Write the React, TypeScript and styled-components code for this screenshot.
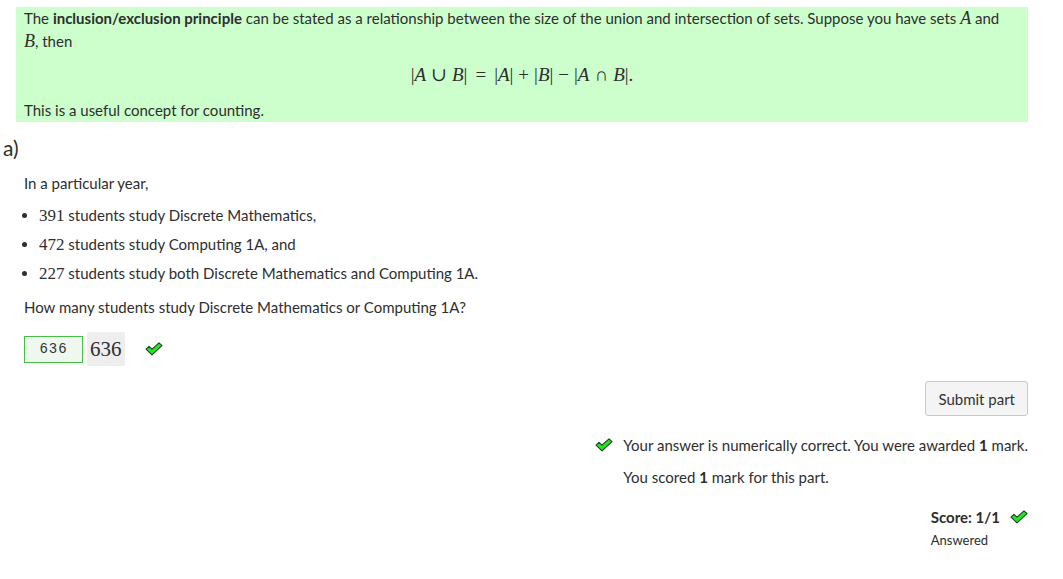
import React from 'react'
import styled, { createGlobalStyle } from 'styled-components'

const GlobalStyle = createGlobalStyle`
  html, body {
    margin: 0;
    padding: 0;
    background: #fff;
  }
  body {
    font-family: Lato, 'Noto Sans', sans-serif;
    font-size: 15px;
    color: #2e2e2e;
  }
`

const Tick: React.FC<{ size?: number }> = ({ size = 18 }) => (
  <TickSvg width={size} height={(size * 14) / 18} viewBox="0 0 18 14" aria-hidden="true">
    <path
      d="M1 7.2 L4 4.4 L7 7.2 L14 0.9 L17 3.6 L7 12.9 Z"
      fill="#1ee81e"
      stroke="#2a3a2a"
      strokeWidth="1.1"
      strokeLinejoin="round"
    />
  </TickSvg>
)

export default function App() {
  return (
    <Page>
      <GlobalStyle />
      <Statement>
        <p>
          The <b>inclusion/exclusion principle</b> can be stated as a relationship between the size of the union and
          intersection of sets. Suppose you have sets <MathVar>A</MathVar> and{' '}
          <NoWrap>
            <MathVar>B</MathVar>, then
          </NoWrap>
        </p>
        <Formula>
          |<i>A</i>
          <Op>∪</Op>
          <i>B</i>|<Rel>=</Rel>|<i>A</i>|<Op>+</Op>|<i>B</i>|<Op>−</Op>|<i>A</i>
          <Op>∩</Op>
          <i>B</i>|.
        </Formula>
        <p>This is a useful concept for counting.</p>
      </Statement>

      <PartHeader>a)</PartHeader>
      <PartBody>
        <Para>In a particular year,</Para>
        <Bullets>
          <li>
            <MathNum>391</MathNum> students study Discrete Mathematics,
          </li>
          <li>
            <MathNum>472</MathNum> students study Computing 1A, and
          </li>
          <li>
            <MathNum>227</MathNum> students study both Discrete Mathematics and Computing 1A.
          </li>
        </Bullets>
        <Question>How many students study Discrete Mathematics or Computing 1A?</Question>
        <AnswerRow>
          <AnswerInput>636</AnswerInput>
          <Preview>636</Preview>
          <Tick />
        </AnswerRow>

        <Actions>
          <SubmitButton>Submit part</SubmitButton>
        </Actions>

        <Feedback>
          <FeedbackLine>
            <TickSlot>
              <Tick />
            </TickSlot>
            <span>
              Your answer is numerically correct. You were awarded <b>1</b> mark.
            </span>
          </FeedbackLine>
          <FeedbackLine>
            <TickSlot />
            <span>
              You scored <b>1</b> mark for this part.
            </span>
          </FeedbackLine>
        </Feedback>

        <ScoreBlock>
          <ScoreLine>
            Score: 1/1
            <Tick />
          </ScoreLine>
          <Status>Answered</Status>
        </ScoreBlock>
      </PartBody>
    </Page>
  )
}

const Page = styled.div`
  padding: 7px 35px 0 0;
`

const Statement = styled.div`
  margin-left: 16px;
  background: #ccffcc;
  padding: 0 8px;
  line-height: 23px;

  p {
    margin: 0;
  }
`

const NoWrap = styled.span`
  white-space: nowrap;
`

const MathVar = styled.i`
  font-family: 'Liberation Serif', 'DejaVu Serif', serif;
  font-size: 18px;
`

const Formula = styled.div`
  text-align: center;
  font-family: 'Liberation Serif', 'DejaVu Serif', serif;
  font-size: 19px;
  margin: 10px 0 12px;
  line-height: 24px;
`

const Op = styled.span`
  margin: 0 5px;
`

const Rel = styled.span`
  margin: 0 8px;
`

const PartHeader = styled.h3`
  margin: 12px 0 0 3px;
  font-family: Lato, 'Noto Sans', sans-serif;
  font-weight: 400;
  font-size: 21px;
  line-height: 28px;
`

const PartBody = styled.div`
  padding-left: 24px;
  display: flex;
  flex-direction: column;
`

const Para = styled.p`
  margin: 10px 0 7px;
  line-height: 22px;
`

const Question = styled(Para)`
  margin-top: 8px;
`

const Bullets = styled.ul`
  margin: 0;
  padding-left: 15px;
  line-height: 28px;
`

const MathNum = styled.span`
  font-family: 'Liberation Serif', 'DejaVu Serif', serif;
  font-size: 17px;
`

const AnswerRow = styled.div`
  display: flex;
  align-items: center;
  gap: 4px;
  margin-top: 7px;
`

const AnswerInput = styled.div`
  width: 57px;
  height: 25px;
  border: 1px solid #44c044;
  background: #eef8ee;
  font-family: 'Liberation Mono', monospace;
  font-size: 14px;
  letter-spacing: 1px;
  display: flex;
  align-items: center;
  justify-content: center;
  color: #333;
`

const Preview = styled.div`
  background: #eeeeee;
  font-family: 'Liberation Serif', 'DejaVu Serif', serif;
  font-size: 21px;
  padding: 0 3px;
  height: 34px;
  display: flex;
  align-items: center;
  margin-right: 16px;
`

const TickSvg = styled.svg`
  display: inline-block;
  flex-shrink: 0;
`

const Actions = styled.div`
  display: flex;
  justify-content: flex-end;
  margin-top: 15px;
`

const SubmitButton = styled.button`
  font-family: Lato, 'Noto Sans', sans-serif;
  font-size: 15px;
  color: #333;
  background: #f4f4f4;
  border: 1px solid #a8d4f0;
  border-radius: 3px;
  padding: 0 12px;
  height: 35px;
`

const Feedback = styled.div`
  align-self: flex-end;
  margin-top: 18px;
  display: flex;
  flex-direction: column;
  gap: 10px;
`

const FeedbackLine = styled.div`
  display: flex;
  align-items: center;
  line-height: 22px;
`

const TickSlot = styled.span`
  width: 28px;
  display: flex;
  align-items: center;
`

const ScoreBlock = styled.div`
  align-self: flex-end;
  margin-top: 18px;
  display: flex;
  flex-direction: column;
`

const ScoreLine = styled.div`
  display: flex;
  align-items: center;
  gap: 10px;
  font-weight: 700;
  font-size: 15px;
  line-height: 22px;
`

const Status = styled.div`
  font-size: 13px;
  margin-top: 4px;
`
